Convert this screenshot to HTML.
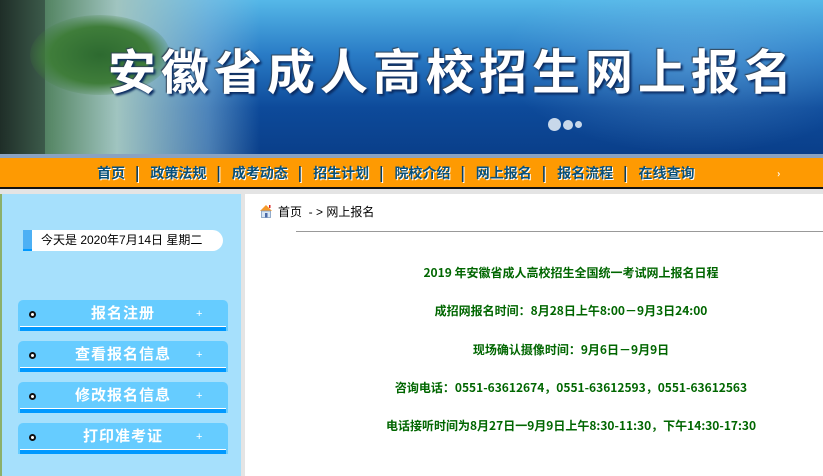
<!DOCTYPE html>
<html><head><meta charset="utf-8"><style>
*{margin:0;padding:0;box-sizing:border-box}
body{width:823px;height:476px;overflow:hidden;background:#fff;font-family:"Liberation Sans","Noto Sans CJK SC",sans-serif;position:relative}
.banner{position:absolute;left:0;top:0;width:823px;height:154px;background:linear-gradient(180deg,#55b8e8 0%,#2a7cc6 35%,#0d4a9a 70%,#0a3f8a 100%);overflow:hidden}
.land{position:absolute;left:0;top:0;width:260px;height:154px;background:linear-gradient(90deg,#2c4a3a 0%,#5a8a6a 20%,#a0c4c0 45%,rgba(140,190,220,0.5) 80%,rgba(80,150,210,0) 100%)}
.tree{position:absolute;left:30px;top:15px;width:140px;height:80px;border-radius:50%;background:radial-gradient(ellipse,#2d6a30,#3f7d3a 50%,rgba(60,120,60,0) 75%)}
.rock{position:absolute;left:0;top:0;width:45px;height:154px;background:linear-gradient(90deg,#1f2e28,#3c5a4a)}
.map{position:absolute;left:500px;top:0;width:323px;height:154px;background:radial-gradient(ellipse at 60% 40%,rgba(140,200,240,.35),rgba(0,0,0,0) 70%)}
.title{position:absolute;left:108px;top:39px;font-size:48px;line-height:58px;font-weight:bold;color:#fff;letter-spacing:5px;text-shadow:2px 2px 2px #0a2a60,-1px -1px 1px #345;white-space:nowrap;font-family:"Noto Sans CJK SC",sans-serif}
.dots{position:absolute;left:548px;top:116px}
.dots span{display:inline-block;border-radius:50%;background:#c8d8ea;margin-right:2px;vertical-align:middle}
.strip{position:absolute;left:0;top:154px;width:823px;height:4px;background:#8aa2c0}
.nav{position:absolute;left:0;top:158px;width:823px;height:31px;background:#fe9a02;border-bottom:2px solid #111;font-size:14px;font-weight:bold;color:#08507a;line-height:30px;white-space:nowrap;font-family:"Noto Sans CJK SC",sans-serif}
.nav .in{position:absolute;left:97px;top:0;text-shadow:1px 1px 0 #fff}
.nav .in b{margin:0 11px 0 10px;color:#0a3e60}
.gap{position:absolute;left:0;top:189px;width:823px;height:5px;background:#e4e4e4}
.side{position:absolute;left:0;top:194px;width:241px;height:282px;background:#a6e0fc;border-left:2px solid #8cb06a}
.sep{position:absolute;left:241px;top:194px;width:4px;height:282px;background:#e4e4e4}
.date{position:absolute;left:23px;top:230px;width:200px;height:21px;background:#fff;border-radius:0 11px 11px 0;font-size:12px;line-height:21px;padding-left:18px;color:#000}
.date i{position:absolute;left:0;top:0;width:9px;height:21px;background:#4db0f4;border-bottom:2px solid #0099ff}
.btn{position:absolute;left:18px;width:210px;height:31px;background:#66ccff;border-radius:5px 5px 0 0;color:#fff;font-size:15px;font-weight:bold;text-align:center;line-height:28px;letter-spacing:1px}
.btn:after{content:"";position:absolute;left:2px;right:2px;bottom:0;height:4px;background:#0099ff;border-top:1px solid #fff}
.btn .o{position:absolute;left:11px;top:11px;width:7px;height:7px;border-radius:50%;border:2px solid #111;background:#fff}
.btn .p{position:absolute;left:178px;top:0;font-size:11px;font-weight:normal}
.crumb{position:absolute;left:258px;top:203px;font-size:12px;color:#000}
.line{position:absolute;left:296px;top:231px;width:527px;height:1px;background:#999}
.c{position:absolute;left:282px;width:578px;text-align:center;font-size:12px;font-weight:bold;color:#006600;font-family:"Noto Sans CJK SC",sans-serif;white-space:nowrap}
</style></head><body>
<div class="banner"><div class="land"></div><div class="rock"></div><div class="tree"></div><div class="map"></div>
<div class="title">安徽省成人高校招生网上报名</div>
<div class="dots"><span style="width:13px;height:13px"></span><span style="width:10px;height:10px"></span><span style="width:7px;height:7px"></span></div></div>
<div class="strip"></div>
<div class="nav"><div class="in">首页<b>|</b>政策法规<b>|</b>成考动态<b>|</b>招生计划<b>|</b>院校介绍<b>|</b>网上报名<b>|</b>报名流程<b>|</b>在线查询</div><span style="position:absolute;left:777px;top:0;font-size:10px;color:#fff">›</span></div>
<div class="gap"></div>
<div class="side"></div><div class="sep"></div>
<div class="date"><i></i>今天是 2020年7月14日 星期二</div>
<div class="btn" style="top:300px"><span class="o"></span>报名注册<span class="p">+</span></div>
<div class="btn" style="top:341px"><span class="o"></span>查看报名信息<span class="p">+</span></div>
<div class="btn" style="top:382px"><span class="o"></span>修改报名信息<span class="p">+</span></div>
<div class="btn" style="top:423px"><span class="o"></span>打印准考证<span class="p">+</span></div>
<div class="crumb"><svg width="16" height="16" viewBox="0 0 16 16" style="vertical-align:-3px;margin-right:4px"><path d="M2 8 L8 2 L14 8 Z" fill="#f59a2a"/><rect x="3.5" y="8" width="9" height="6.5" fill="#d8e6f4" stroke="#7d9cc0" stroke-width=".8"/><rect x="7" y="10" width="2.5" height="4.5" fill="#4a6aa8"/><rect x="11" y="2" width="1.5" height="3" fill="#d22"/></svg>首页 &nbsp;- &gt; 网上报名</div>
<div class="line"></div>
<div class="c" style="top:264px">2019 年安徽省成人高校招生全国统一考试网上报名日程</div>
<div class="c" style="top:302px">成招网报名时间：8月28日上午8:00－9月3日24:00</div>
<div class="c" style="top:341px">现场确认摄像时间：9月6日－9月9日</div>
<div class="c" style="top:379px">咨询电话：0551-63612674，0551-63612593，0551-63612563</div>
<div class="c" style="top:417px">电话接听时间为8月27日一9月9日上午8:30-11:30，下午14:30-17:30</div>
</body></html>
